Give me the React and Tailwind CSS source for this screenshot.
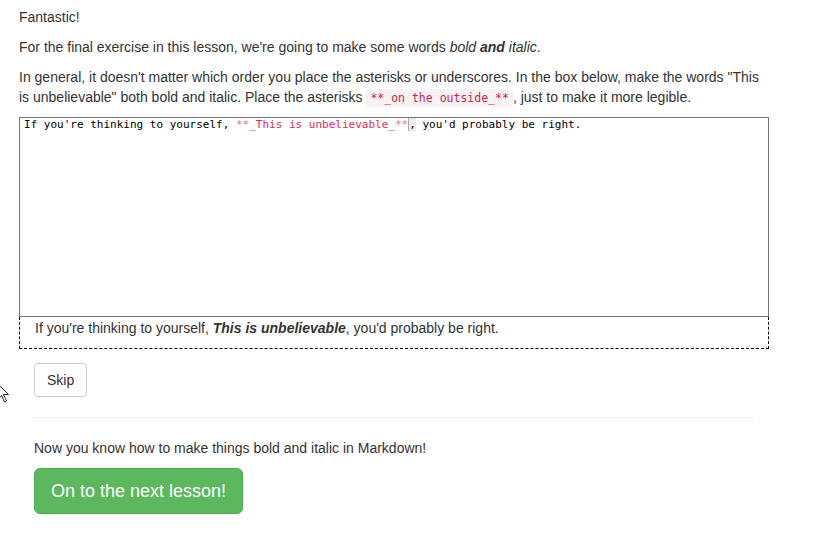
import React from "react";

export default function App() {
  const mono = { fontFamily: '"DejaVu Sans Mono", "Liberation Mono", monospace' };
  return (
    <div className="relative min-h-[543px] bg-white text-[14px] leading-[20px] text-[#333]" style={{ fontFamily: '"Liberation Sans", Arial, sans-serif' }}>
      <div className="w-[750px] pl-[19px] pt-[7px] box-content">
        <p className="mb-[10px]">Fantastic!</p>
        <p className="mb-[10px]">
          For the final exercise in this lesson, we're going to make some words <em>bold <strong>and</strong> italic</em>.
        </p>
        <p className="mb-[10px] h-[40px]">
          In general, it doesn't matter which order you place the asterisks or underscores. In the box below, make the words "This is unbelievable" both bold and italic. Place the asterisks{" "}
          <code className="rounded-[4px] bg-[#f9f2f4] px-[4px] py-[2px] text-[11.5px] leading-none text-[#c7254e]" style={mono}>**_on the outside_**</code>, just to make it more legible.
        </p>
        <div className="h-[200px] border border-[#767676] px-[4px] text-[11px] leading-[14px] text-black" style={mono}>
          If you're thinking to yourself,{" "}
          <span className="text-[#f0709a]">**</span>
          <span className="text-[#e8265a]">_This is unbelievable_</span>
          <span className="text-[#f0709a]">**</span>
          <span className="border-l border-[#aaa] bg-[#ececec]">,</span> you'd probably be right.
        </div>
        <div className="h-[32px] border border-t-0 border-dashed border-black px-[15px] pt-[1px]">
          If you're thinking to yourself, <strong><em>This is unbelievable</em></strong>, you'd probably be right.
        </div>
        <div className="px-[15px] pt-[14px]">
          <button className="h-[34px] rounded-[4px] border border-[#ccc] bg-white px-[12px] text-[14px] text-[#333]">Skip</button>
          <hr className="my-[20px] border-t border-[#eee]" />
          <p className="mb-[10px]">Now you know how to make things bold and italic in Markdown!</p>
          <button className="h-[46px] rounded-[6px] border border-[#4cae4c] bg-[#5cb85c] px-[16px] text-[18px] text-white">On to the next lesson!</button>
        </div>
      </div>
      <svg className="absolute left-[-3px] top-[383px]" width="14" height="22" viewBox="0 0 14 22">
        <path d="M1 1 L1 16 L4.5 12.5 L7.5 19 L9.5 18 L6.5 11.5 L11.5 11.5 Z" fill="white" stroke="#333" strokeWidth="1" />
      </svg>
    </div>
  );
}
